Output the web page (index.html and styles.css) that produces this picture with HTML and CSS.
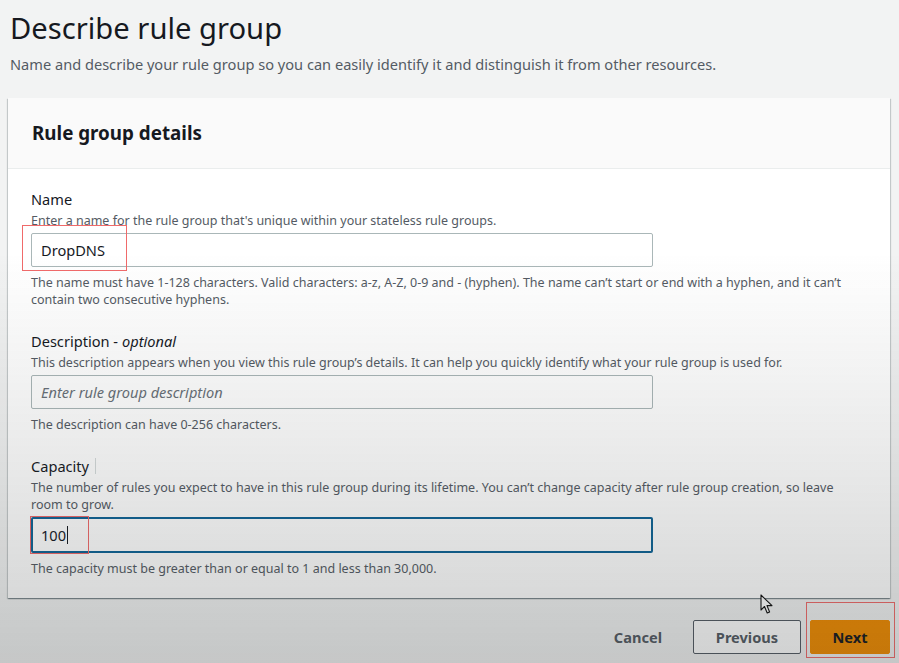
FILE: index.html
```html
<!DOCTYPE html>
<html>
<head>
<meta charset="utf-8">
<link rel="stylesheet" href="styles.css">
</head>
<body>
<div class="page">
  <h1 class="title">Describe rule group</h1>
  <p class="subtitle">Name and describe your rule group so you can easily identify it and distinguish it from other resources.</p>

  <section class="card">
    <div class="card-header">
      <h2 class="card-title">Rule group details</h2>
    </div>
    <div class="card-body">
      <div class="field">
        <div class="label">Name</div>
        <div class="help">Enter a name for the rule group that's unique within your stateless rule groups.</div>
        <div class="input-wrap">
          <div class="input">DropDNS</div>
          <span class="mark mark-name"></span>
        </div>
        <div class="constraint">The name must have 1-128 characters. Valid characters: a-z, A-Z, 0-9 and - (hyphen). The name can’t start or end with a hyphen, and it can’t contain two consecutive hyphens.</div>
      </div>

      <div class="field">
        <div class="label">Description - <i>optional</i></div>
        <div class="help">This description appears when you view this rule group’s details. It can help you quickly identify what your rule group is used for.</div>
        <div class="input-wrap">
          <div class="input placeholder">Enter rule group description</div>
        </div>
        <div class="constraint">The description can have 0-256 characters.</div>
      </div>

      <div class="field">
        <div class="label">Capacity <span class="divider"></span></div>
        <div class="help">The number of rules you expect to have in this rule group during its lifetime. You can’t change capacity after rule group creation, so leave room to grow.</div>
        <div class="input-wrap">
          <div class="input focused">100<span class="caret"></span></div>
          <span class="mark mark-cap"></span>
        </div>
        <div class="constraint">The capacity must be greater than or equal to 1 and less than 30,000.</div>
      </div>
    </div>
  </section>

  <div class="actions">
    <button class="btn btn-link">Cancel</button>
    <button class="btn btn-normal">Previous</button>
    <div class="next-wrap">
      <button class="btn btn-primary">Next</button>
      <span class="mark mark-next"></span>
    </div>
  </div>
</div>

<svg class="cursor" width="14" height="21" viewBox="0 0 14 21">
  <path d="M1 1 L1 16 L4.5 12.5 L7.2 19 L9.6 18 L7 11.6 L12 11.6 Z" fill="#fff" stroke="#111" stroke-width="1.1" stroke-linejoin="round"/>
</svg>
<div class="vignette"></div>
</body>
</html>
```

FILE: styles.css
```css
* { box-sizing: border-box; }

html, body {
  margin: 0;
  padding: 0;
  height: 100%;
}

body {
  background: #f2f3f3;
  font-family: "Noto Sans", "Open Sans", sans-serif;
  color: #16191f;
  overflow: hidden;
}

.page {
  padding: 0 9px 0 8px;
}

.title {
  margin: 0;
  padding: 10px 0 0 2px;
  font-size: 29.2px;
  line-height: 37px;
  font-weight: 400;
  color: #16191f;
}

.subtitle {
  margin: 7px 0 0 0;
  padding-left: 2px;
  font-size: 14.6px;
  line-height: 20px;
  color: #545b64;
}

.card {
  margin-top: 24px;
  background: #fff;
  box-shadow: 0 1px 1px 0 rgba(0,28,36,0.3), 1px 1px 1px 0 rgba(0,28,36,0.15), -1px 1px 1px 0 rgba(0,28,36,0.15);
}

.card-header {
  height: 71px;
  background: #fafafa;
  border-bottom: 1px solid #eaeded;
  padding: 0 24px;
  display: flex;
  align-items: center;
}

.card-title {
  margin: 0;
  font-size: 18.8px;
  font-weight: 700;
  line-height: 24px;
}

.card-body {
  padding: 20px 23px 21px;
  display: flex;
  flex-direction: column;
  gap: 23px;
}

.label {
  font-size: 14.6px;
  line-height: 20px;
  display: flex;
  align-items: center;
  gap: 6px;
  margin-bottom: 3px;
}

.label i { margin-left: -2px; }

.divider {
  display: inline-block;
  width: 1px;
  height: 16px;
  background: #d5dbdb;
}

.help, .constraint {
  font-size: 12.5px;
  line-height: 17px;
  color: #545b64;
}

.help { margin-bottom: 4px; }
.constraint { margin-top: 7px; }

.input-wrap {
  position: relative;
  width: 622px;
}

.input {
  height: 34px;
  border: 1px solid #aab7b8;
  border-radius: 2px;
  background: #fff;
  padding: 0 9px;
  font-size: 14.6px;
  line-height: 32px;
  display: flex;
  align-items: center;
}

.placeholder {
  color: #687078;
  font-style: italic;
}

.focused {
  border: 2px solid #0f6496;
  padding: 0 8px;
  height: 36px;
}

.caret {
  display: inline-block;
  width: 1px;
  height: 18px;
  background: #16191f;
  margin-left: 1px;
}

.mark {
  position: absolute;
  border: 1.5px solid #f06a6a;
  pointer-events: none;
}

.mark-name {
  left: -9px;
  top: -8px;
  width: 105px;
  height: 46px;
}

.mark-cap {
  left: -1px;
  top: -1px;
  width: 59px;
  height: 38px;
}

.actions {
  display: flex;
  justify-content: flex-end;
  align-items: center;
  margin-top: 22px;
  gap: 9px;
}

.btn {
  font-family: "Noto Sans", "Open Sans", sans-serif;
  font-size: 14.6px;
  font-weight: 700;
  border-radius: 2px;
  cursor: pointer;
  height: 34px;
}

.btn-link {
  background: transparent;
  border: none;
  color: #545b64;
  padding: 0 20px;
  margin-right: 2px;
}

.btn-normal {
  background: #fff;
  border: 1px solid #545b64;
  color: #545b64;
  width: 108px;
}

.btn-primary {
  background: #f28c00;
  border: 1px solid #f28c00;
  color: #16191f;
  width: 80px;
}

.next-wrap {
  position: relative;
  display: flex;
}

.mark-next {
  left: -4px;
  top: -18px;
  width: 89px;
  height: 56px;
}

.cursor {
  position: absolute;
  left: 760px;
  top: 594px;
}

.vignette {
  position: fixed;
  inset: 0;
  pointer-events: none;
  background: linear-gradient(to bottom, rgba(0,0,0,0) 0%, rgba(0,0,0,0) 38%, rgba(40,45,45,0.12) 75%, rgba(40,45,45,0.22) 100%);
}
```
